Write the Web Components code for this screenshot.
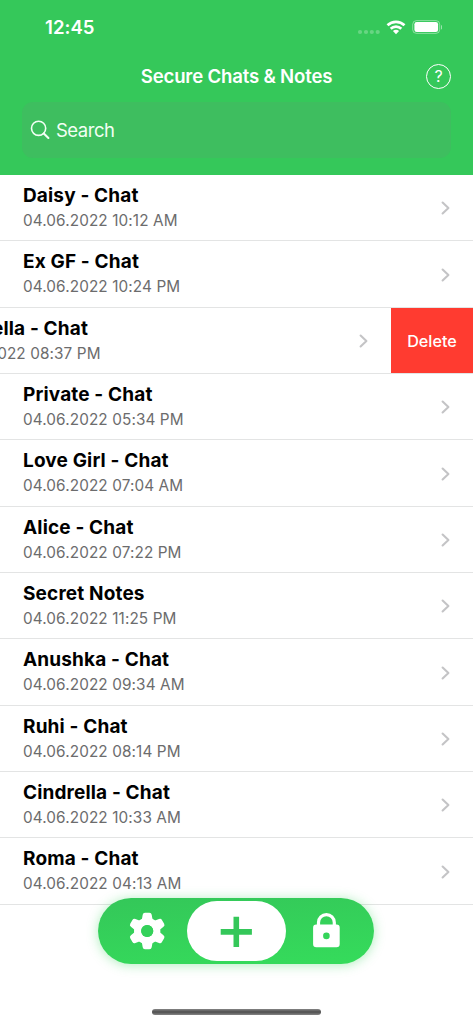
<!DOCTYPE html>
<html lang="en">
<head>
<meta charset="utf-8">
<meta name="viewport" content="width=device-width">
<title>Secure Chats &amp; Notes</title>
<style>
body{margin:0;background:#fff;font-family:Inter,"Liberation Sans",sans-serif;overflow:hidden}
</style>
</head>
<body>
<secure-app></secure-app>
<script>
const define = (name, html, setup) => customElements.define(name, class extends HTMLElement {
  constructor() {
    super();
    this.attachShadow({mode: 'open'}).innerHTML = html;
  }
  connectedCallback() { if (setup) setup(this, this.shadowRoot); }
});

define('status-bar', `
<style>
:host{display:flex;height:54px;box-sizing:border-box;padding:0 31px 0 45px;color:#fff;justify-content:space-between}
time{font-size:18.6px;font-weight:600;line-height:54px;letter-spacing:.02px}
svg{display:block}
</style>
<time>12:45</time>
<svg width="86" height="54" viewBox="356 0 86 54">
  <g fill="#fff" opacity=".25"><circle cx="360" cy="32" r="2.1"/><circle cx="366" cy="32" r="2.1"/><circle cx="371.8" cy="32" r="2.1"/><circle cx="377.7" cy="32" r="2.1"/></g>
  <g fill="none" stroke="#fff" stroke-width="2.7"><path d="M387.5 25.3a12.3 12.3 0 0 1 17 0"/><path d="M390.7 28.8a7.6 7.6 0 0 1 10.6 0"/></g>
  <path d="M392.9 31.1a4.5 4.5 0 0 1 6.2 0L396 34.2z" fill="#fff"/>
  <rect x="412.7" y="20.6" width="27" height="12.8" rx="3.8" fill="none" stroke="#fff" opacity=".42"/>
  <rect x="414.4" y="22" width="23.7" height="10" rx="2.3" fill="#fff"/>
  <path d="M441 25v4.6q1.5-.7 1.5-2.3T441 25z" fill="#fff" opacity=".5"/>
</svg>`);

define('nav-title', `
<style>
:host{display:grid;grid-template-columns:1fr auto 1fr;align-items:center;height:45px;padding:0 22px;color:#fff}
h1{grid-column:2;margin:0;font-size:18.6px;font-weight:600;line-height:45px;letter-spacing:-.18px;white-space:nowrap}
button{justify-self:end;width:25px;height:25px;border:1.2px solid #fff;border-radius:50%;background:none;color:#fff;padding:0 0 1px;font:400 16px/21px Inter,sans-serif;box-sizing:border-box}
</style>
<h1><slot></slot></h1><button aria-label="Help">?</button>`);

define('search-field', `
<style>
:host{display:flex;align-items:center;height:56px;margin:3px 22px 0;border-radius:11px;background:#3ebe5f;color:#f2fff4;box-sizing:border-box;padding-left:8px;font-size:18.5px}
svg{flex:none;margin-right:6px}
span{letter-spacing:-.5px}
</style>
<svg width="20" height="20" viewBox="30 120 20 20" fill="none" stroke="#f2fff4" stroke-linecap="round"><circle cx="38.6" cy="128.3" r="7.1" stroke-width="1.6"/><path d="m43.8 133.5 4.6 4.5" stroke-width="2.1"/></svg>
<span><slot></slot></span>`);

define('chat-row', `
<style>
:host{display:flex;height:66.35px;box-sizing:border-box;border-bottom:1px solid #e3e4e4;overflow:hidden}
.cell{flex:none;width:100%;box-sizing:border-box;padding:8px 22px 0 23px;display:flex;justify-content:space-between}
:host([open]) .cell{margin-left:-82px}
:host(:not([open])) button{display:none}
h2{margin:0;font-size:19px;line-height:25px;font-weight:700;color:#000;letter-spacing:.15px;white-space:nowrap}
p{margin:0;font-size:15.3px;line-height:25px;color:#6c6c6d;letter-spacing:.11px;white-space:nowrap}
svg{flex:none;margin-top:17.3px}
button{flex:none;width:82px;height:66px;border:0;padding:0;background:#ff3b30;color:#fff;font:500 16.2px Inter,sans-serif}
</style>
<div class="cell"><div><h2><slot></slot></h2><p></p></div>
<svg width="10" height="16" viewBox="0 0 10 16" fill="none" stroke="#c4c4c6" stroke-width="2.1" stroke-linecap="round" stroke-linejoin="round"><path d="M1.6 2.5 7.4 8 1.6 13.5"/></svg></div>
<button>Delete</button>`, (el, root) => { root.querySelector('p').textContent = el.getAttribute('date'); });

define('tab-pill', `
<style>
:host{display:flex;width:276px;height:66px;box-sizing:border-box;border-radius:33px;background:linear-gradient(175deg,#34c759,#35dc5b);box-shadow:0 1px 12px rgba(52,210,90,.4);align-items:center;padding:0 3px}
svg{display:block;flex:none}
.add{width:99px;height:60px;border-radius:30px;background:#fff}
</style>
<svg width="85.5" height="60" viewBox="101.5 901 85.5 60"><defs><path id="tooth" d="M-5.6-10 -4.5-16.2Q-4.2-18.3-2.2-18.3H2.2Q4.2-18.3 4.5-16.2L5.6-10z"/></defs><g transform="translate(147.7 931)" fill="#fff"><use href="#tooth"/><use href="#tooth" transform="rotate(60)"/><use href="#tooth" transform="rotate(120)"/><use href="#tooth" transform="rotate(180)"/><use href="#tooth" transform="rotate(240)"/><use href="#tooth" transform="rotate(300)"/><circle r="9.6" fill="none" stroke="#fff" stroke-width="7.2"/><circle r="6.1" fill="#34d15a"/></g></svg>
<svg class="add" viewBox="187 901 99 60"><path d="M220.7 931.9h31.2M236.3 916.8v30.2" stroke="#34c759" stroke-width="5.6"/></svg>
<svg width="85.5" height="60" viewBox="286 901 85.5 60"><path d="M318.5 925v-2.5a7.9 7.9 0 0 1 15.8 0v2.5" fill="none" stroke="#fff" stroke-width="3.2"/><path fill="#fff" fill-rule="evenodd" d="M316.3 924.5h20.2a3.2 3.2 0 0 1 3.2 3.2v16.3a3.2 3.2 0 0 1-3.2 3.2h-20.2a3.2 3.2 0 0 1-3.2-3.2v-16.3a3.2 3.2 0 0 1 3.2-3.2zM326.4 932.6a3.3 3.3 0 1 0 0 6.6 3.3 3.3 0 0 0 0-6.6z"/></svg>`);

define('secure-app', `
<style>
:host{display:block;position:relative;width:473px;height:1024px;background:#fff;overflow:hidden}
header{height:175px;background:#35c85a}
.dock{position:absolute;left:98.4px;top:897.6px}
.home{position:absolute;left:152px;top:1009px;width:169px;height:5.5px;border-radius:3px;background:linear-gradient(#858585,#4f4f4f 50%,#858585)}
</style>
<header><status-bar></status-bar><nav-title>Secure Chats &amp; Notes</nav-title><search-field>Search</search-field></header>
<main>
<chat-row date="04.06.2022 10:12 AM">Daisy - Chat</chat-row>
<chat-row date="04.06.2022 10:24 PM">Ex GF - Chat</chat-row>
<chat-row open date="04.06.2022 08:37 PM">Cindrella - Chat</chat-row>
<chat-row date="04.06.2022 05:34 PM">Private - Chat</chat-row>
<chat-row date="04.06.2022 07:04 AM">Love Girl - Chat</chat-row>
<chat-row date="04.06.2022 07:22 PM">Alice - Chat</chat-row>
<chat-row date="04.06.2022 11:25 PM">Secret Notes</chat-row>
<chat-row date="04.06.2022 09:34 AM">Anushka - Chat</chat-row>
<chat-row date="04.06.2022 08:14 PM">Ruhi - Chat</chat-row>
<chat-row date="04.06.2022 10:33 AM">Cindrella - Chat</chat-row>
<chat-row date="04.06.2022 04:13 AM">Roma - Chat</chat-row>
</main>
<tab-pill class="dock"></tab-pill>
<div class="home"></div>`);
</script>
</body>
</html>
